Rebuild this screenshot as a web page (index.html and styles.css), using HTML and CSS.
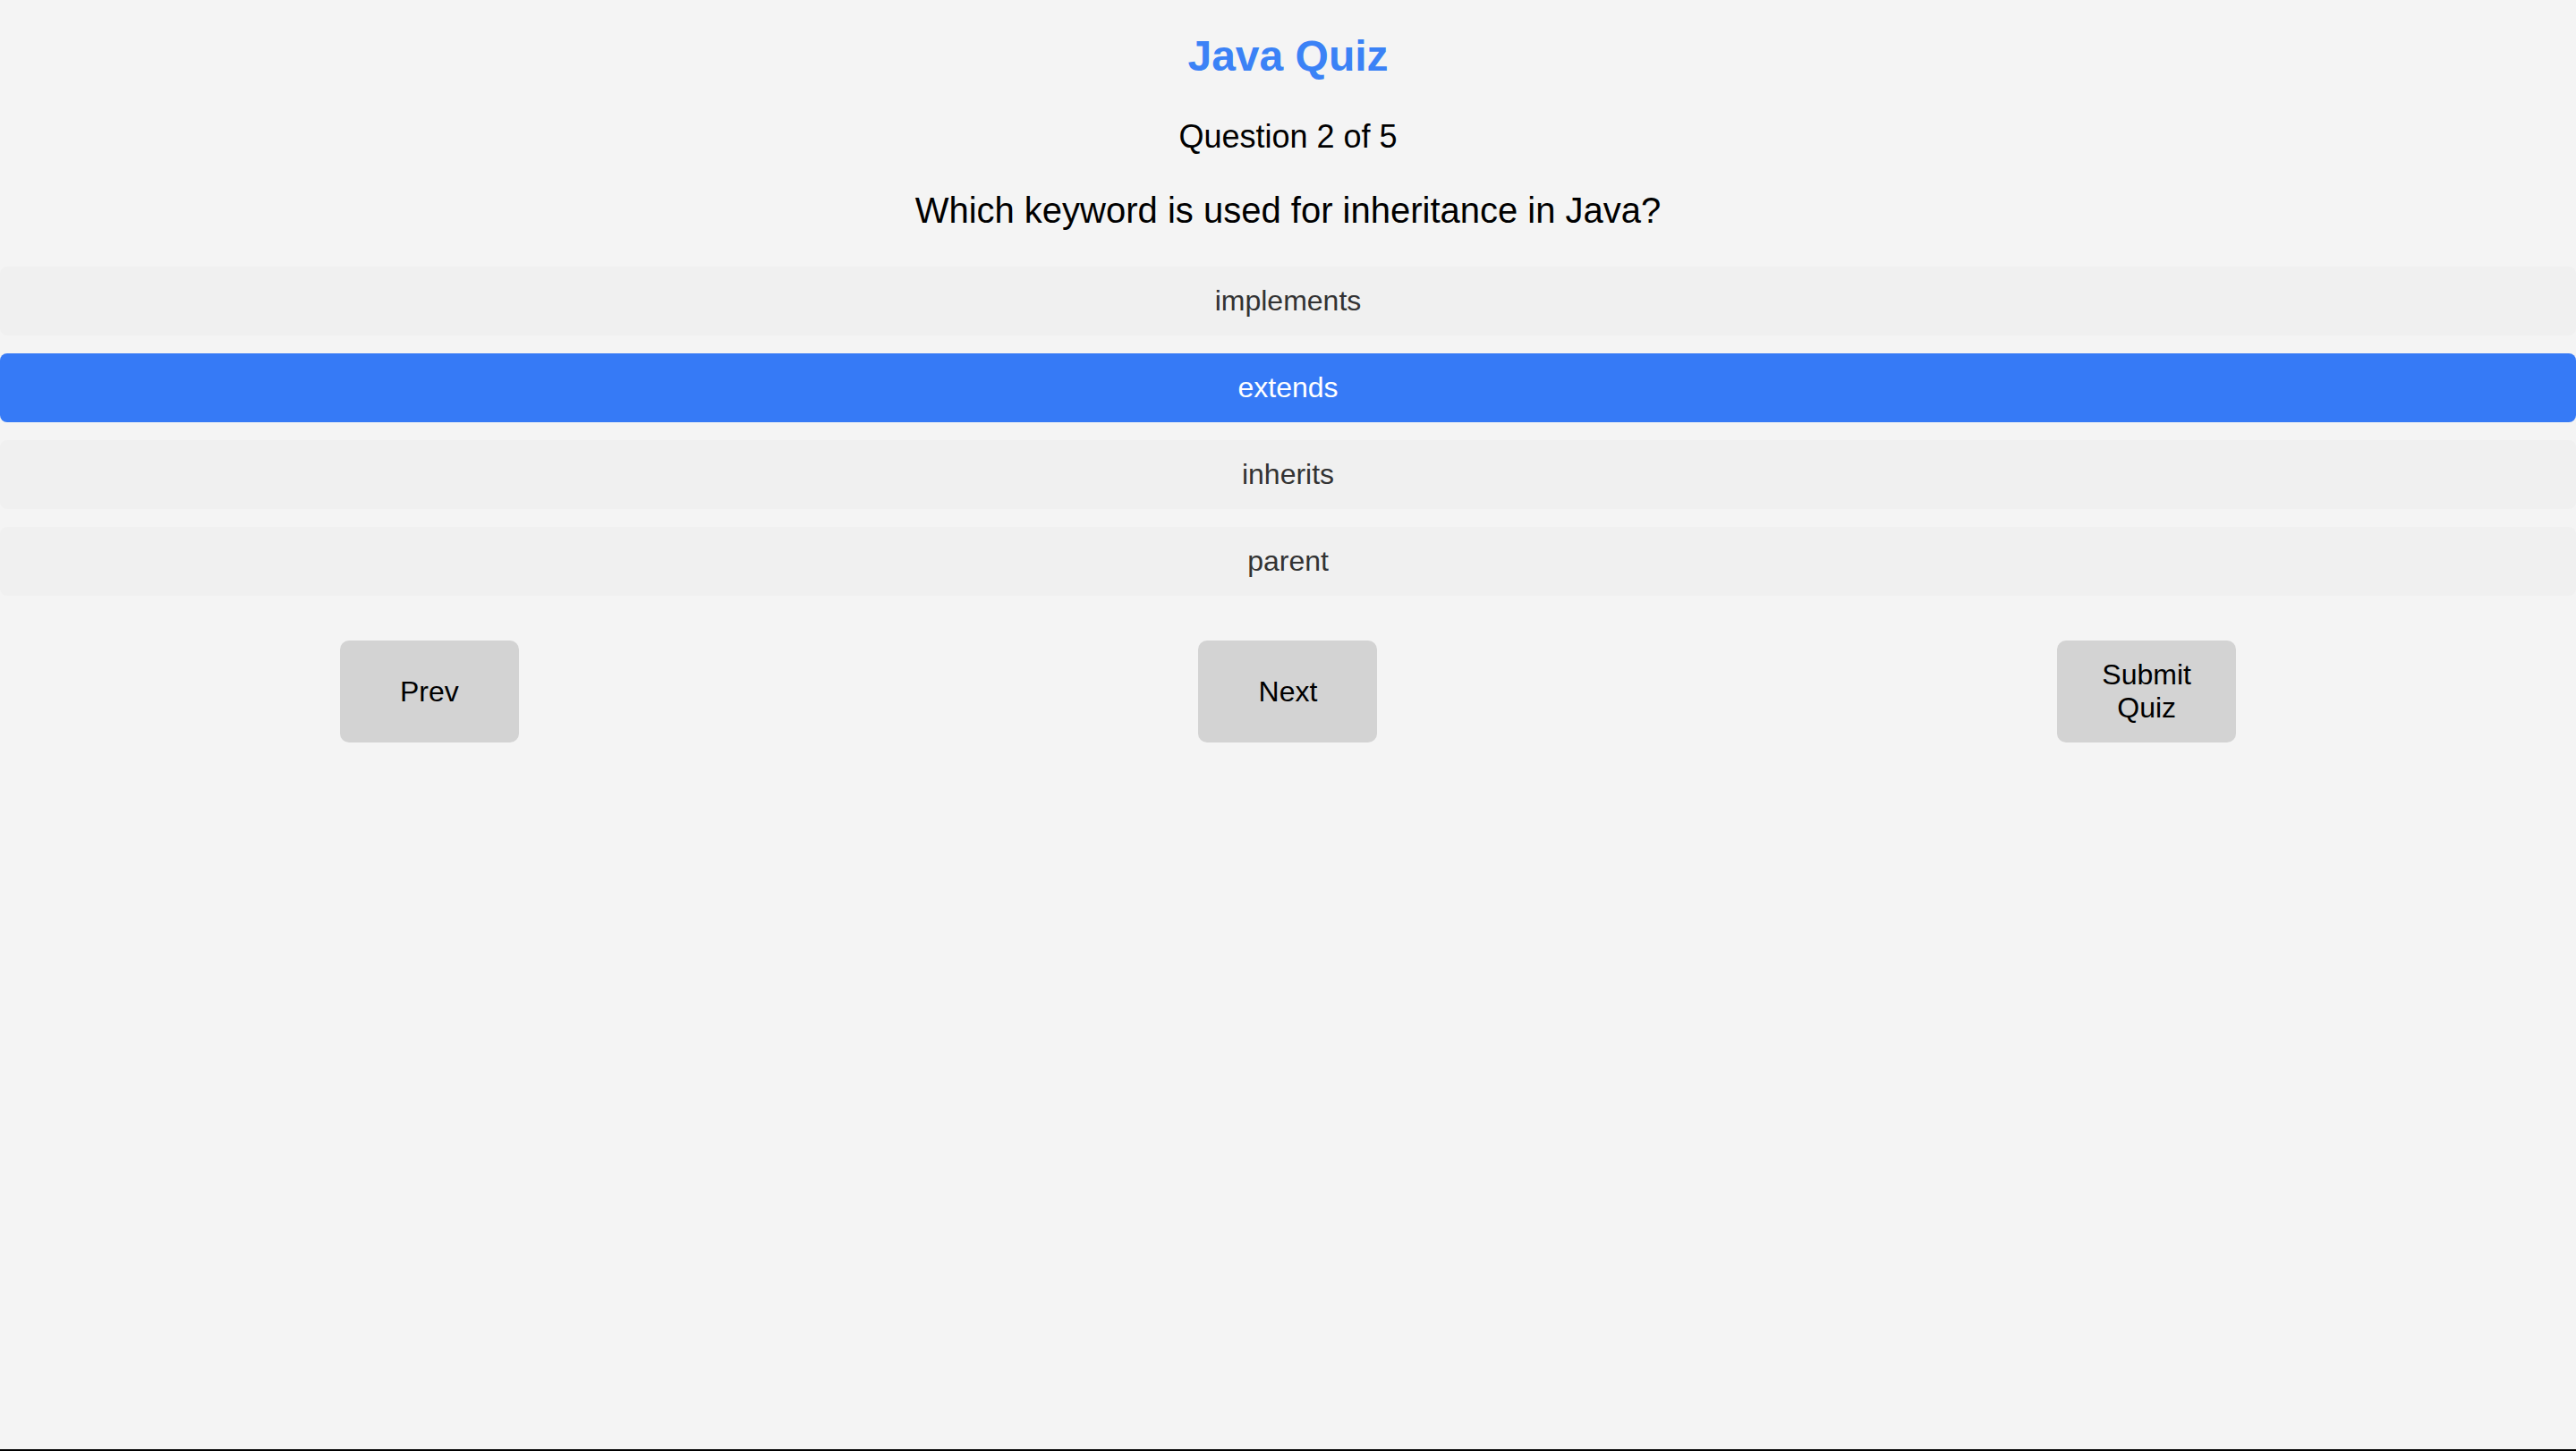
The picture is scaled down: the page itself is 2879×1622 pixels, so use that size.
FILE: index.html
```html
<!DOCTYPE html>
<html lang="en">
<head>
<meta charset="utf-8">
<title>Java Quiz</title>
<link rel="stylesheet" href="styles.css">
</head>
<body>
<div class="page">
  <h1 class="title">Java Quiz</h1>
  <p class="counter">Question 2 of 5</p>
  <p class="question">Which keyword is used for inheritance in Java?</p>
  <div class="options">
    <div class="option">implements</div>
    <div class="option selected">extends</div>
    <div class="option">inherits</div>
    <div class="option">parent</div>
  </div>
  <div class="nav">
    <button class="btn">Prev</button>
    <button class="btn">Next</button>
    <button class="btn">Submit Quiz</button>
  </div>
</div>
</body>
</html>
```
FILE: styles.css
```css
html, body {
  margin: 0;
  padding: 0;
}
body {
  background: #f4f4f4;
  font-family: "Liberation Sans", Arial, sans-serif;
  color: #000;
}
.page {
  box-sizing: border-box;
  min-height: 100vh;
  border-bottom: 2px solid #000;
  padding-top: 35px;
  text-align: center;
}
.title {
  margin: 0;
  font-size: 48px;
  font-weight: bold;
  color: #3b82f6;
}
.counter {
  margin: 42px 0 0;
  font-size: 36px;
}
.question {
  margin: 39px 0 0;
  font-size: 40px;
}
.options {
  margin-top: 40px;
  display: flex;
  flex-direction: column;
  gap: 20px;
}
.option {
  padding: 20px;
  background: #f0f0f0;
  border-radius: 8px;
  font-size: 32px;
  color: #333;
}
.option.selected {
  background: #367af6;
  color: #fff;
}
.nav {
  margin-top: 50px;
  display: flex;
  justify-content: space-around;
}
.btn {
  box-sizing: border-box;
  width: 200px;
  padding: 20px 30px;
  border: none;
  border-radius: 10px;
  background: #d3d3d3;
  font-family: "Liberation Sans", Arial, sans-serif;
  font-size: 32px;
  color: #000;
}
```
